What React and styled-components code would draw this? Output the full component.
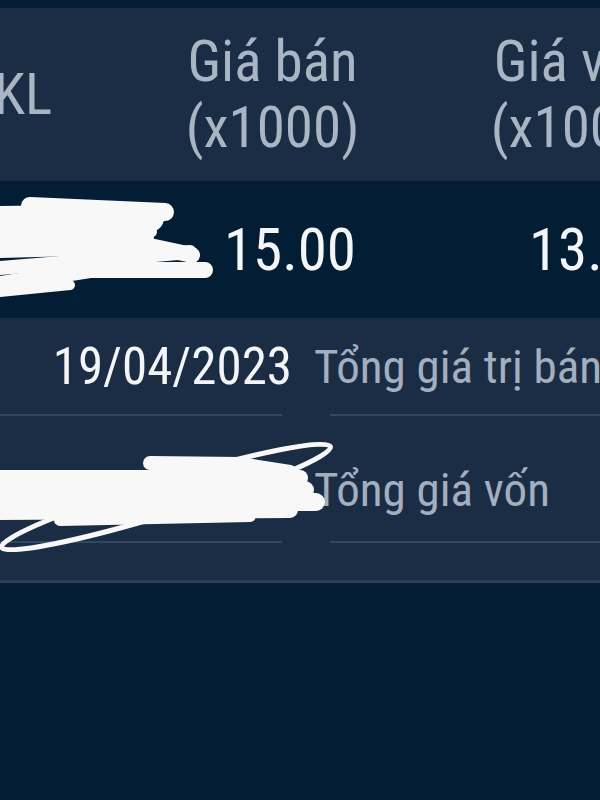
import React from "react";
import styled, { createGlobalStyle } from "styled-components";

const GlobalStyle = createGlobalStyle`
  html, body { margin: 0; padding: 0; background: #021d34; }
  #root { width: 600px; }
`;

const Screen = styled.div`
  position: relative;
  width: 600px;
  height: 800px;
  overflow: hidden;
  background: #021d34;
  font-family: "Roboto Condensed", Roboto, sans-serif;
  padding-top: 8px;
  box-sizing: border-box;
`;

const Table = styled.div`
  display: grid;
  grid-template-columns: 194px 305px 305px;
  margin-left: -74px;
  width: 804px;
`;

const HeadCell = styled.div`
  height: 173px;
  background: #1b2d45;
  display: flex;
  align-items: center;
  justify-content: center;
  text-align: center;
  color: #aab5c3;
  font-size: 57px;
  line-height: 66px;
`;

const ValueCell = styled.div`
  height: 137px;
  display: flex;
  align-items: center;
  justify-content: flex-end;
  padding-right: 69px;
  color: #f3f5f8;
  font-size: 59px;
`;

const Summary = styled.div`
  background: #1b2d45;
  padding-bottom: 37px;
  border-bottom: 3px solid #2a3f58;
`;

const SumRow = styled.div`
  display: grid;
  grid-template-columns: 314px 1fr;
  height: ${(p) => p.h}px;
`;

const SumCell = styled.div`
  display: flex;
  flex-direction: column;
  min-width: 0;
`;

const SumText = styled.div`
  flex: 1;
  display: flex;
  align-items: center;
  justify-content: ${(p) => (p.right ? "flex-end" : "flex-start")};
  padding-right: ${(p) => (p.right ? "22px" : "0")};
  padding-top: ${(p) => p.pt || 0}px;
  white-space: nowrap;
  color: ${(p) => (p.right ? "#f3f5f8" : "#a3afbe")};
  font-size: ${(p) => (p.right ? "51px" : "47px")};
`;

const Divider = styled.div`
  height: 2px;
  background: #33485f;
  margin: ${(p) => (p.left ? "0 32px 0 0" : "0 0 0 16px")};
`;

const Scribble = styled.svg`
  position: absolute;
  left: 0;
  top: 0;
  pointer-events: none;
`;

export default function App() {
  return (
    <Screen>
      <GlobalStyle />
      <Table>
        <HeadCell>KL</HeadCell>
        <HeadCell>
          Giá bán
          <br />
          (x1000)
        </HeadCell>
        <HeadCell>
          Giá vốn
          <br />
          (x1000)
        </HeadCell>
        <ValueCell />
        <ValueCell>15.00</ValueCell>
        <ValueCell>13.00</ValueCell>
      </Table>
      <Summary>
        <SumRow h={98}>
          <SumCell>
            <SumText right>19/04/2023</SumText>
            <Divider left />
          </SumCell>
          <SumCell>
            <SumText>Tổng giá trị bán</SumText>
            <Divider />
          </SumCell>
        </SumRow>
        <SumRow h={127}>
          <SumCell>
            <SumText right pt={22} />
            <Divider left />
          </SumCell>
          <SumCell>
            <SumText pt={22}>Tổng giá vốn</SumText>
            <Divider />
          </SumCell>
        </SumRow>
      </Summary>
      <Scribble width="600" height="800" viewBox="0 0 600 800">
        <g stroke="#f8f8f8" strokeLinecap="round" strokeLinejoin="round" fill="none">
          <path d="M30 206 L165 212" strokeWidth="18" />
          <path d="M0 220 L150 218" strokeWidth="28" />
          <path d="M0 240 L140 236" strokeWidth="28" />
          <path d="M0 250 L150 246 L192 255" strokeWidth="16" />
          <path d="M0 268 L120 258 L190 252" strokeWidth="14" />
          <path d="M0 284 L90 270 L205 270" strokeWidth="16" />
          <path d="M0 292 L70 285" strokeWidth="10" />
          <path d="M150 228 L152 232" strokeWidth="10" />
          <path d="M150 463 L240 464 L290 472" strokeWidth="14" />
          <path d="M0 478 L300 478" strokeWidth="16" />
          <path d="M0 490 L305 490" strokeWidth="18" />
          <path d="M0 502 L316 502" strokeWidth="18" />
          <path d="M0 512 L290 510" strokeWidth="16" />
          <path d="M60 520 L250 516" strokeWidth="12" />
          <ellipse cx="166" cy="497" rx="172" ry="17" transform="rotate(-17 166 497)" strokeWidth="5" />
        </g>
      </Scribble>
    </Screen>
  );
}
